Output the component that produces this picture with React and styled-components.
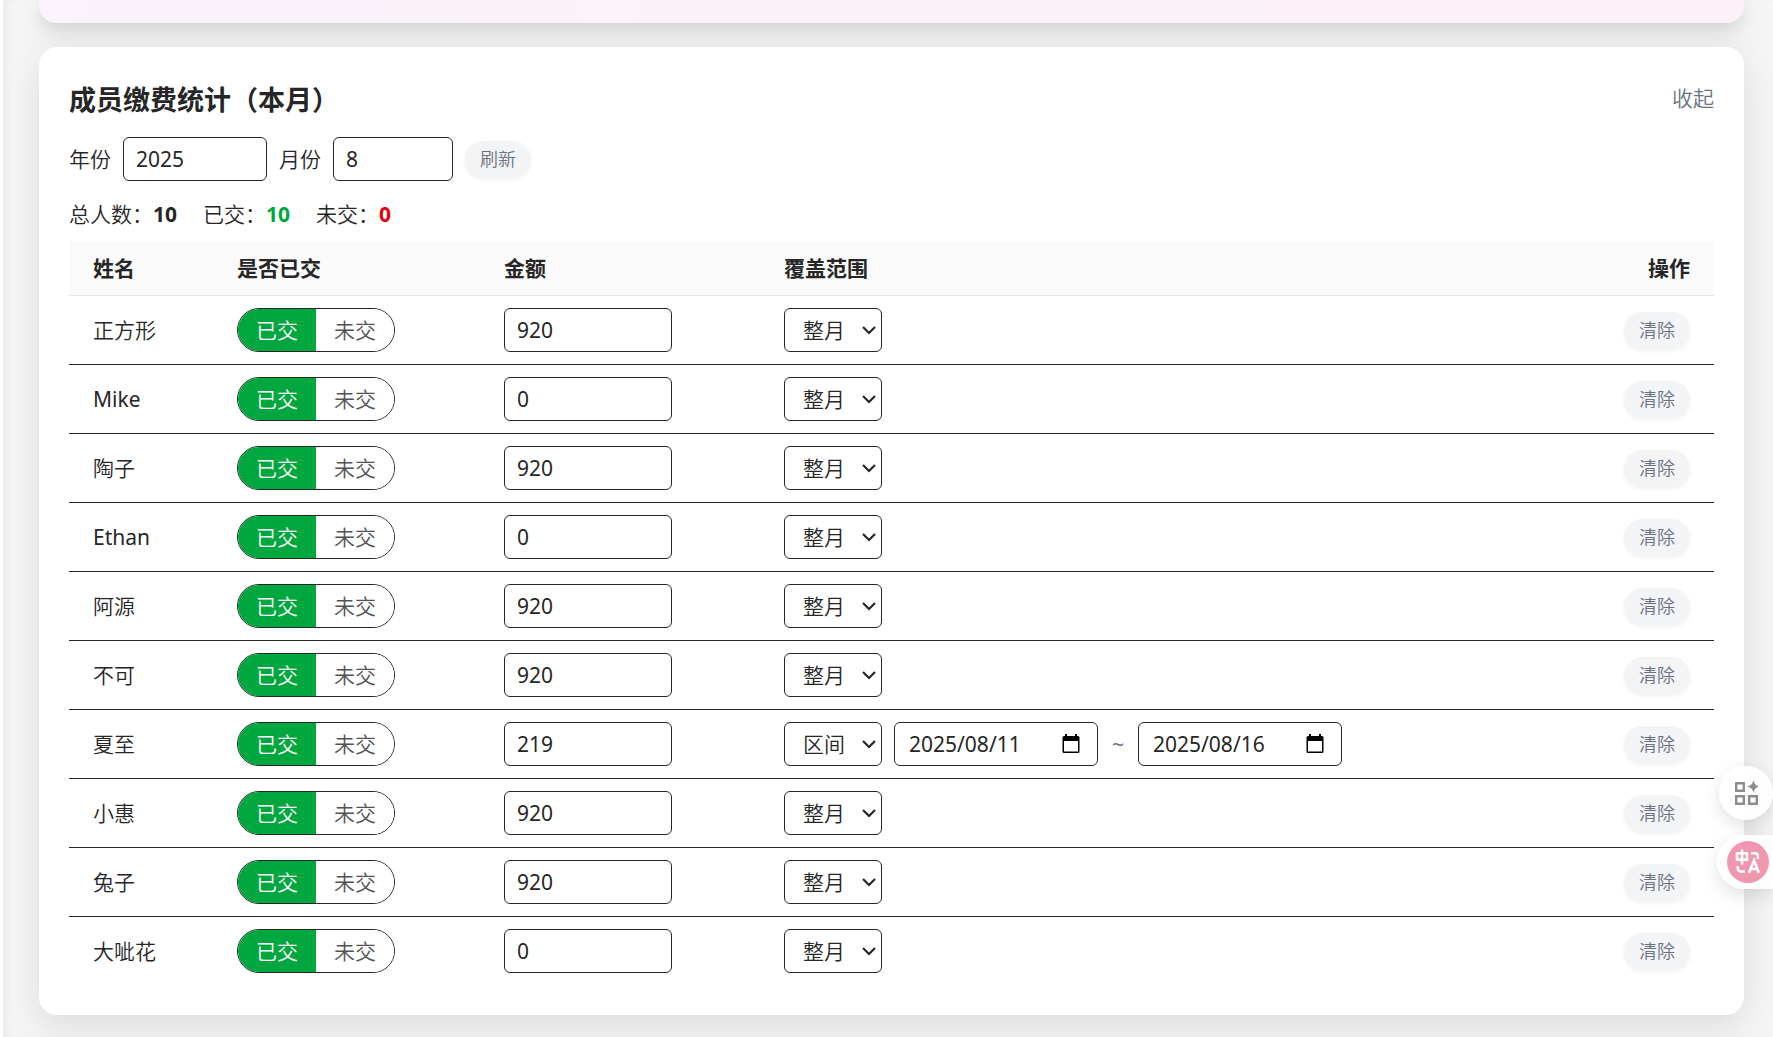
import React, { useState } from "react";
import styled, { createGlobalStyle, css } from "styled-components";

const fontStack = `"Noto Sans", "Noto Sans CJK SC", sans-serif`;

const GlobalStyle = createGlobalStyle`
  *, *::before, *::after { box-sizing: border-box; }
  html { background: #f5f5f5; }
  body {
    margin: 0;
    overflow: hidden;
    font-family: ${fontStack};
    font-size: 21px;
    line-height: 30px;
    font-weight: 350;
    color: #262626;
  }
  button, input, select { font: inherit; color: inherit; }
`;

const Page = styled.div`
  border-left: 3px solid #fff;
  padding: 0 29px 22px 36px;
  box-shadow: inset 6px 0 12px -6px rgba(0, 0, 0, 0.08);
`;

const Stack = styled.main`
  display: grid;
  gap: 24px;
`;

const Banner = styled.section`
  height: 23px;
  border-radius: 0 0 18px 18px;
  background: linear-gradient(90deg, #faf3fb, #fdf1f8);
  box-shadow: 0 15px 38px rgba(0, 0, 0, 0.08), 0 6px 15px rgba(0, 0, 0, 0.1);
`;

const Card = styled.section`
  padding: 30px;
  border-radius: 18px;
  background: #fff;
  box-shadow: 0 12px 36px rgba(0, 0, 0, 0.1);
`;

const CardHeader = styled.header`
  display: flex;
  align-items: center;
  justify-content: space-between;
  margin-bottom: 18px;
`;

const Title = styled.h2`
  margin: 0;
  padding-top: 4px;
  font-size: 27px;
  line-height: 38px;
  font-weight: 700;
`;

const TextButton = styled.button`
  padding: 0;
  border: 0;
  background: none;
  color: #6a7282;
  cursor: pointer;
`;

const Filters = styled.form`
  display: flex;
  align-items: center;
  gap: 12px;
  margin-bottom: 18px;
`;

const field = css`
  height: 44px;
  border: 1px solid #262626;
  border-radius: 6px;
  background: #fff;
`;

const Field = styled.input`
  ${field}
  width: ${(p) => p.$width}px;
  padding: 0 12px;
  font-weight: 400;
`;

const Pill = styled.button`
  padding: 5px 15px;
  border: 0;
  border-radius: 19px;
  background: #f3f4f6;
  box-shadow: 0 2px 4px rgba(0, 0, 0, 0.06);
  color: #6a7282;
  font-size: 18px;
  line-height: 27px;
  cursor: pointer;
`;

const Stats = styled.div`
  display: flex;
  gap: 26px;
  margin-bottom: 12px;
`;

const Count = styled.strong`
  font-weight: 700;
  color: ${(p) => p.$color || "inherit"};
`;

const Table = styled.table`
  width: 100%;
  table-layout: fixed;
  border-collapse: separate;
  border-spacing: 0;
`;

const Col = styled.col`
  width: ${(p) => p.$width || "auto"};
`;

const Th = styled.th`
  padding: 12px 24px;
  border-bottom: 1px solid #e5e5e5;
  background: #fafafa;
  font-weight: 700;
  text-align: ${(p) => p.$align || "left"};
`;

const Td = styled.td`
  padding: 12px 24px;
  height: 68px;
  text-align: ${(p) => p.$align || "left"};
  vertical-align: middle;
`;

const NameCell = styled(Td)`
  font-weight: ${(p) => (p.$latin ? 400 : "inherit")};
`;

const Row = styled.tr`
  &:not(:last-child) > td {
    height: 69px;
    border-bottom: 1px solid #262626;
  }
`;

const Toggle = styled.div`
  display: flex;
  width: 158px;
  height: 44px;
  border: 1px solid #262626;
  border-radius: 22px;
  overflow: hidden;
`;

const ToggleButton = styled.button`
  flex: 1;
  padding: 0;
  border: 0;
  background: ${(p) => (p.$active ? "#00a63e" : "#fff")};
  color: ${(p) => (p.$active ? "#fff" : "#525252")};
  cursor: pointer;
`;

const Range = styled.div`
  display: flex;
  align-items: center;
  gap: 12px;
`;

const SelectBox = styled.div`
  display: grid;
  align-items: center;
  width: 98px;

  & > * {
    grid-area: 1 / 1;
  }

  & > svg {
    justify-self: end;
    margin-right: 6px;
    pointer-events: none;
  }
`;

const Select = styled.select`
  ${field}
  width: 100%;
  padding: 0 18px;
  appearance: none;
`;

const DateBox = styled.div`
  ${field}
  display: flex;
  align-items: center;
  width: 204px;
  padding: 0 17px 0 14px;
`;

const DateInput = styled.input`
  flex: 1;
  min-width: 0;
  padding: 0;
  border: 0;
  outline: 0;
  background: none;
  font-weight: 400;
`;

const IconButton = styled.button`
  display: flex;
  padding: 0;
  border: 0;
  background: none;
  cursor: pointer;
`;

const Tilde = styled.span`
  width: 16px;
  text-align: center;
  color: #6a7282;
  font-weight: 400;
`;

const Dock = styled.aside`
  position: fixed;
  right: 0;
  top: 766px;
  display: grid;
  justify-items: end;
  gap: 15px;
`;

const DockButton = styled.button`
  display: flex;
  align-items: center;
  justify-content: center;
  width: ${(p) => (p.$docked ? 56 : 54)}px;
  height: 54px;
  padding: ${(p) => (p.$docked ? "0 0 0 5px" : "0")};
  border: 0;
  border-radius: ${(p) => (p.$docked ? "27px 0 0 27px" : "27px")};
  background: rgba(255, 255, 255, 0.9);
  box-shadow: 0 6px 18px rgba(0, 0, 0, 0.12);
  cursor: pointer;
`;

const Chevron = () => (
  <svg width="14" height="10" viewBox="0 0 14 10" fill="none" stroke="#262626" strokeWidth="2.2" aria-hidden="true">
    <path d="M1 2l6 6 6-6" />
  </svg>
);

const CalendarIcon = () => (
  <svg width="18" height="20" viewBox="0 0 18 20" fill="#000" aria-hidden="true">
    <path fillRule="evenodd" d="M3 0h2v2h8V0h2v2h1a1.500 1.500 0 0 1 1.500 1.500v14a1.500 1.500 0 0 1-1.500 1.500H2a1.500 1.500 0 0 1-1.500-1.500v-14A1.500 1.500 0 0 1 2 2h1zM2 7v10.500h14V7z" />
  </svg>
);

const AppsIcon = () => (
  <svg width="26" height="26" viewBox="0 0 26 26" fill="none" stroke="#8c8c8c" strokeWidth="2.400" aria-hidden="true">
    <path d="M3.200 3.200h7.600v7.600H3.200zM3.200 16.200h7.600v7.600H3.200zM16.200 16.200h7.600v7.600h-7.600z" />
    <path d="M20.500 0c.9 4 2.200 5.500 5.500 6.500-3.300 1-4.600 2.500-5.500 6.500-.9-4-2.200-5.500-6.500-6.500 4.300-1 5.600-2.500 6.500-6.500z" fill="#8c8c8c" stroke="none" />
  </svg>
);

const TranslateIcon = () => (
  <svg width="42" height="42" viewBox="0 0 42 42" fill="none" stroke="#fff" strokeWidth="2.600" aria-hidden="true">
    <circle cx="21" cy="21" r="21" fill="#f097af" stroke="none" />
    <path d="M10 12.200h10v6.600H10zM15 8.500v15M24 12.200h4a2.800 2.800 0 0 1 2.800 2.800v3M10.800 25v2.500a3 3 0 0 0 3 3H18M22 32l5-12.500L32 32M23.800 28h6.400" />
  </svg>
);

const initialMembers = [
  { name: "正方形", amount: 920 },
  { name: "Mike", amount: 0 },
  { name: "陶子", amount: 920 },
  { name: "Ethan", amount: 0 },
  { name: "阿源", amount: 920 },
  { name: "不可", amount: 920 },
  { name: "夏至", amount: 219, from: "2025/08/11", to: "2025/08/16" },
  { name: "小惠", amount: 920 },
  { name: "兔子", amount: 920 },
  { name: "大呲花", amount: 0 },
];

function DateField({ label, value }) {
  return (
    <DateBox>
      <DateInput aria-label={label} defaultValue={value} />
      <IconButton type="button" aria-label={`选择${label}`}>
        <CalendarIcon />
      </IconButton>
    </DateBox>
  );
}

function MemberRow({ member, paid, onPaid }) {
  const [mode, setMode] = useState(member.from ? "range" : "month");
  return (
    <Row>
      <NameCell $latin={/^[A-Za-z]/.test(member.name)}>{member.name}</NameCell>
      <Td>
        <Toggle>
          <ToggleButton type="button" $active={paid} aria-pressed={paid} onClick={() => onPaid(true)}>
            已交
          </ToggleButton>
          <ToggleButton type="button" $active={!paid} aria-pressed={!paid} onClick={() => onPaid(false)}>
            未交
          </ToggleButton>
        </Toggle>
      </Td>
      <Td>
        <Range>
          <Field $width={168} aria-label={`${member.name}金额`} inputMode="numeric" defaultValue={member.amount} />
        </Range>
      </Td>
      <Td>
        <Range>
          <SelectBox>
            <Select aria-label={`${member.name}覆盖范围`} value={mode} onChange={(e) => setMode(e.target.value)}>
              <option value="month">整月</option>
              <option value="range">区间</option>
            </Select>
            <Chevron />
          </SelectBox>
          {mode === "range" && (
            <>
              <DateField label="开始日期" value={member.from} />
              <Tilde>~</Tilde>
              <DateField label="结束日期" value={member.to} />
            </>
          )}
        </Range>
      </Td>
      <Td $align="right">
        <Pill type="button">清除</Pill>
      </Td>
    </Row>
  );
}

export default function App() {
  const [paid, setPaid] = useState(initialMembers.map(() => true));
  const paidCount = paid.filter(Boolean).length;

  return (
    <>
      <GlobalStyle />
      <Page>
        <Stack>
          <Banner />
          <Card>
            <CardHeader>
              <Title>成员缴费统计（本月）</Title>
              <TextButton type="button">收起</TextButton>
            </CardHeader>
            <Filters onSubmit={(e) => e.preventDefault()}>
              <label htmlFor="year">年份</label>
              <Field id="year" $width={144} inputMode="numeric" defaultValue="2025" />
              <label htmlFor="month">月份</label>
              <Field id="month" $width={120} inputMode="numeric" defaultValue="8" />
              <Pill type="submit">刷新</Pill>
            </Filters>
            <Stats>
              <span>总人数：<Count>{paid.length}</Count></span>
              <span>已交：<Count $color="#00a63e">{paidCount}</Count></span>
              <span>未交：<Count $color="#e7000b">{paid.length - paidCount}</Count></span>
            </Stats>
            <Table>
              <colgroup>
                <Col $width="144px" />
                <Col $width="267px" />
                <Col $width="280px" />
                <Col />
                <Col $width="144px" />
              </colgroup>
              <thead>
                <tr>
                  <Th>姓名</Th>
                  <Th>是否已交</Th>
                  <Th>金额</Th>
                  <Th>覆盖范围</Th>
                  <Th $align="right">操作</Th>
                </tr>
              </thead>
              <tbody>
                {initialMembers.map((member, index) => (
                  <MemberRow
                    key={member.name}
                    member={member}
                    paid={paid[index]}
                    onPaid={(value) => setPaid(paid.map((old, i) => (i === index ? value : old)))}
                  />
                ))}
              </tbody>
            </Table>
          </Card>
        </Stack>
      </Page>
      <Dock>
        <DockButton type="button" aria-label="应用">
          <AppsIcon />
        </DockButton>
        <DockButton type="button" aria-label="翻译" $docked>
          <TranslateIcon />
        </DockButton>
      </Dock>
    </>
  );
}
